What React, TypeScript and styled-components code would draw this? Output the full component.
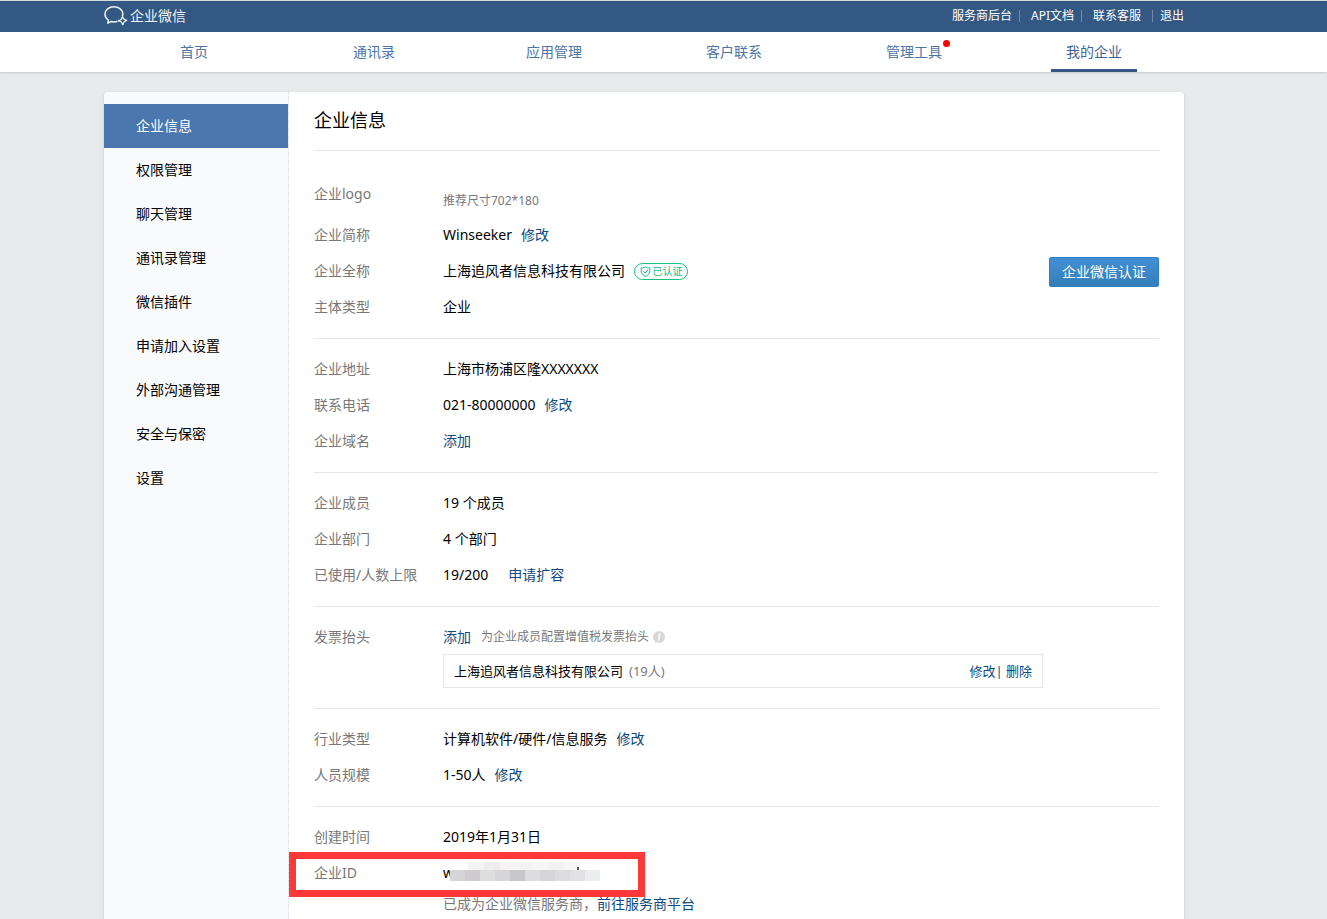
import React from "react";
import styled, { createGlobalStyle } from "styled-components";

const GlobalStyle = createGlobalStyle`
  * { box-sizing: border-box; }
  body {
    margin: 0;
    background: #e7e9eb;
    color: #000;
    font: 14px/20px "Noto Sans", "Noto Sans CJK SC", sans-serif;
  }
  a { color: inherit; text-decoration: none; }
  ul, dl, dd { margin: 0; padding: 0; }
  ul { list-style: none; }
`;

const Page = styled.div`
  min-height: 100vh;
  display: flex;
  flex-direction: column;
`;

const Band = styled.div`
  padding: 0 39px 0 0;
`;

const TopBand = styled(Band)`
  background: #335883;
  border-top: 1px solid #d3dade;
`;

const NavBand = styled(Band)`
  background: #fff;
  box-shadow: 0 1px 2px rgba(0, 0, 0, 0.14);
`;

const BodyBand = styled(Band)`
  flex: 1;
  display: flex;
  padding-top: 20px;
`;

const Container = styled.div`
  width: 100%;
  max-width: 1080px;
  margin: 0 auto;
`;

const TopBar = styled(Container)`
  height: 31px;
  padding-bottom: 2px;
  display: flex;
  align-items: center;
  justify-content: space-between;
`;

const Brand = styled.a`
  display: flex;
  align-items: center;
  gap: 2px;
  color: #eef3f8;
  font-size: 14px;
`;

const TopLinks = styled.ul`
  display: flex;
  color: #fff;
  font-size: 12px;
`;

const TopItem = styled.li<{ $last?: boolean }>`
  display: flex;
  align-items: center;
  &:not(:first-child)::before {
    content: "";
    width: 1px;
    height: 12px;
    margin: ${(p) => (p.$last ? "0 7px 0 11px" : "0 11px 0 7px")};
    background: #7189a8;
  }
`;

const Nav = styled(Container)`
  display: grid;
  grid-template-columns: repeat(6, 1fr);
  justify-items: center;
`;

const NavLink = styled.a<{ $active?: boolean }>`
  position: relative;
  height: 40px;
  padding: 0 15px;
  line-height: 40px;
  color: ${(p) => (p.$active ? "#3c6595" : "#4c75a3")};
  border-bottom: 3px solid ${(p) => (p.$active ? "#335883" : "transparent")};
`;

const RedDot = styled.span`
  position: absolute;
  top: 8px;
  right: 7px;
  width: 7px;
  height: 7px;
  border-radius: 50%;
  background: #f00;
`;

const Card = styled(Container)`
  display: flex;
  background: #fff;
  border-radius: 4px 4px 0 0;
  box-shadow: 0 1px 3px rgba(0, 0, 0, 0.16);
  overflow: hidden;
`;

const Sidebar = styled.nav`
  flex: 0 0 185px;
  padding-top: 12px;
  background: #f8fafc;
  border-right: 1px dotted #d3d9e0;
`;

const SideLink = styled.a<{ $active?: boolean }>`
  display: block;
  padding-left: 32px;
  line-height: 44px;
  color: ${(p) => (p.$active ? "#fff" : "#000")};
  background: ${(p) => (p.$active ? "#4a78ae" : "transparent")};
`;

const Main = styled.main`
  flex: 1;
  min-width: 0;
  padding: 0 25px;
`;

const Title = styled.h1`
  margin: 0;
  padding-bottom: 2px;
  font-size: 18px;
  font-weight: 400;
  line-height: 56px;
  border-bottom: 1px solid #e2e4e6;
`;

const Group = styled.dl`
  padding: 12px 0 13px;
  border-bottom: 1px solid #e4e6e9;
  &:last-child {
    padding-bottom: 0;
    border-bottom: 0;
  }
`;

const Row = styled.div`
  position: relative;
  display: flex;
  line-height: 36px;
`;

const LogoRow = styled(Row)`
  height: 54px;
  padding-top: 13px;
`;

const Label = styled.dt`
  flex: 0 0 129px;
  color: #787878;
`;

const Value = styled.dd`
  flex: 1;
  display: flex;
  align-items: center;
`;

const LogoHint = styled.dd`
  align-self: flex-end;
  color: #787878;
  font-size: 12px;
  line-height: 32px;
`;

const Action = styled.a<{ $gap?: number }>`
  margin-left: ${(p) => p.$gap ?? 9}px;
  color: #0d4a80;
`;

const Verified = styled.span`
  display: inline-flex;
  align-items: center;
  justify-content: center;
  gap: 2px;
  width: 54px;
  height: 17px;
  margin-left: 9px;
  border: 1px solid #14c27e;
  border-radius: 9px;
  color: #14c27e;
  font-size: 10px;
  line-height: 15px;
`;

const VerifyButton = styled.button`
  width: 110px;
  height: 30px;
  margin: 2px 0 0 auto;
  padding: 0;
  border: 1px solid #2a80c4;
  border-radius: 2px;
  background: linear-gradient(#438fd6, #357fb8);
  color: #fff;
  font: inherit;
  line-height: 28px;
`;

const InvoiceValue = styled.dd`
  flex: 1;
`;

const InvoiceHead = styled.div`
  display: flex;
  align-items: center;
  height: 35px;
`;

const InvoiceHint = styled.span`
  margin: 0 4px 0 10px;
  color: #787878;
  font-size: 12px;
`;

const InvoiceBox = styled.div`
  display: flex;
  justify-content: space-between;
  max-width: 600px;
  margin-bottom: 7px;
  padding: 0 10px;
  border: 1px solid #e4e6e9;
  font-size: 13px;
  line-height: 32px;
`;

const Count = styled.span`
  margin-left: 6px;
  color: #787878;
`;

const InvoiceActions = styled.span`
  color: #0d4a80;
`;

const Highlight = styled.div`
  position: absolute;
  top: -3px;
  left: -25px;
  width: 356px;
  height: 45px;
  border: 7px solid #fc3838;
`;

const Masked = styled.span`
  position: relative;
`;

const Mosaic = styled.svg`
  position: absolute;
  top: 6px;
  left: 6px;
`;

const Note = styled.dd`
  padding: 0 0 2px 129px;
  color: #787878;
  line-height: 26px;
`;

const BrandIcon = () => (
  <svg width="24" height="22" viewBox="0 0 24 22" fill="none" stroke="#eef3f8" strokeWidth="1.5" strokeLinejoin="round" aria-hidden="true">
    <path d="M18.3 11.3C18.7 10.4 18.8 9.8 18.8 9C18.8 4.9 14.9 1.8 9.9 1.8S1 4.9 1 9.2C1 11.7 2.2 13.6 4.2 15L3.9 18.2L7 16.5C9 17 11.4 17 13.5 16.3" />
    <path d="M18.4 12.2L20 14.1L22.2 15.2L20.3 16.8L18.9 19.2L17.3 17.1L15 15.8L17.2 14.4Z" strokeWidth="1.2" />
    <circle cx="18.5" cy="12.2" r="1" fill="#eef3f8" stroke="none" />
    <circle cx="22.2" cy="15.4" r="1" fill="#eef3f8" stroke="none" />
    <circle cx="18.7" cy="19.3" r="1" fill="#eef3f8" stroke="none" />
    <circle cx="15" cy="15.8" r="1" fill="#eef3f8" stroke="none" />
  </svg>
);

const ShieldIcon = () => (
  <svg width="11" height="11" viewBox="0 0 11 11" fill="none" stroke="#14c27e" strokeLinejoin="round" aria-hidden="true">
    <path d="M5.5 .8C6.9 1.7 8.3 2 9.8 2V5.2C9.8 7.6 8 9.4 5.5 10.4C3 9.4 1.2 7.6 1.2 5.2V2C2.7 2 4.1 1.7 5.5 .8Z" />
    <path d="M3.4 5.4L5 7L7.9 4.1" />
  </svg>
);

const InfoIcon = () => (
  <svg width="12" height="12" viewBox="0 0 12 12" aria-hidden="true">
    <circle cx="6" cy="6" r="6" fill="#d8d8d8" />
    <circle cx="6.7" cy="3.2" r="0.9" fill="#fff" />
    <path d="M5 5.2H6.5L5.7 8.8H6.6" fill="none" stroke="#fff" strokeWidth="1.2" />
  </svg>
);

const upperTiles = ["#f5f4f4", "#eeedee", "#f6f4f5", "#f3f3f3", "#f7f6f6", "#f2f2f2", "#f6f6f7"];
const lowerTiles = ["#d6d4d6", "#cfcbce", "#dedede", "#d6d5d7", "#c8c7ca", "#dddcde", "#d6d6d8", "#dcdbdd", "#e1e0e2", "#eceded"];

const MaskTiles = () => (
  <Mosaic width="152" height="24" viewBox="0 0 152 24" aria-hidden="true">
    <rect x="1" y="6" width="20" height="6" fill="#fff" opacity="0.6" />
    {upperTiles.map((fill, i) => (
      <rect key={i} x={19 + i * 16} y="1" width="16" height="8" fill={fill} />
    ))}
    {lowerTiles.map((fill, i) => (
      <rect key={i} x={1 + i * 15} y="9" width="15" height="11" fill={fill} />
    ))}
    <path d="M129 6V9" stroke="#222" strokeWidth="1.5" />
  </Mosaic>
);

const topLinks = ["服务商后台", "API文档", "联系客服", "退出"];
const navItems = ["首页", "通讯录", "应用管理", "客户联系", "管理工具", "我的企业"];
const sideItems = ["企业信息", "权限管理", "聊天管理", "通讯录管理", "微信插件", "申请加入设置", "外部沟通管理", "安全与保密", "设置"];

type FieldProps = { label: string; children: React.ReactNode };

const Field = ({ label, children }: FieldProps) => (
  <Row>
    <Label>{label}</Label>
    <Value>{children}</Value>
  </Row>
);

export default function App() {
  return (
    <Page>
      <GlobalStyle />
      <TopBand as="header">
        <TopBar>
          <Brand href="#">
            <BrandIcon />
            企业微信
          </Brand>
          <TopLinks>
            {topLinks.map((t, i) => (
              <TopItem key={t} $last={i === topLinks.length - 1}>
                <a href="#">{t}</a>
              </TopItem>
            ))}
          </TopLinks>
        </TopBar>
      </TopBand>
      <NavBand as="nav">
        <Nav>
          {navItems.map((t) => (
            <NavLink key={t} href="#" $active={t === "我的企业"}>
              {t}
              {t === "管理工具" && <RedDot />}
            </NavLink>
          ))}
        </Nav>
      </NavBand>
      <BodyBand>
        <Card>
          <Sidebar>
            {sideItems.map((t, i) => (
              <SideLink key={t} href="#" $active={i === 0}>
                {t}
              </SideLink>
            ))}
          </Sidebar>
          <Main>
            <Title>企业信息</Title>
            <Group>
              <LogoRow>
                <Label>企业logo</Label>
                <LogoHint>推荐尺寸702*180</LogoHint>
              </LogoRow>
              <Field label="企业简称">
                Winseeker<Action href="#">修改</Action>
              </Field>
              <Field label="企业全称">
                上海追风者信息科技有限公司
                <Verified>
                  <ShieldIcon />
                  已认证
                </Verified>
                <VerifyButton type="button">企业微信认证</VerifyButton>
              </Field>
              <Field label="主体类型">企业</Field>
            </Group>
            <Group>
              <Field label="企业地址">上海市杨浦区隆XXXXXXX</Field>
              <Field label="联系电话">
                021-80000000<Action href="#">修改</Action>
              </Field>
              <Field label="企业域名">
                <Action href="#" $gap={0}>添加</Action>
              </Field>
            </Group>
            <Group>
              <Field label="企业成员">19 个成员</Field>
              <Field label="企业部门">4 个部门</Field>
              <Field label="已使用/人数上限">
                19/200<Action href="#" $gap={20}>申请扩容</Action>
              </Field>
            </Group>
            <Group>
              <Row>
                <Label>发票抬头</Label>
                <InvoiceValue>
                  <InvoiceHead>
                    <Action href="#" $gap={0}>添加</Action>
                    <InvoiceHint>为企业成员配置增值税发票抬头</InvoiceHint>
                    <InfoIcon />
                  </InvoiceHead>
                  <InvoiceBox>
                    <span>
                      上海追风者信息科技有限公司
                      <Count>(19人)</Count>
                    </span>
                    <InvoiceActions>
                      <a href="#">修改</a>| <a href="#">删除</a>
                    </InvoiceActions>
                  </InvoiceBox>
                </InvoiceValue>
              </Row>
            </Group>
            <Group>
              <Field label="行业类型">
                计算机软件/硬件/信息服务<Action href="#">修改</Action>
              </Field>
              <Field label="人员规模">
                1-50人<Action href="#">修改</Action>
              </Field>
            </Group>
            <Group>
              <Field label="创建时间">2019年1月31日</Field>
              <Field label="企业ID">
                <Masked>
                  ww
                  <MaskTiles />
                </Masked>
                <Highlight />
              </Field>
              <Note>
                已成为企业微信服务商，
                <Action href="#" $gap={0}>前往服务商平台</Action>
              </Note>
            </Group>
          </Main>
        </Card>
      </BodyBand>
    </Page>
  );
}
